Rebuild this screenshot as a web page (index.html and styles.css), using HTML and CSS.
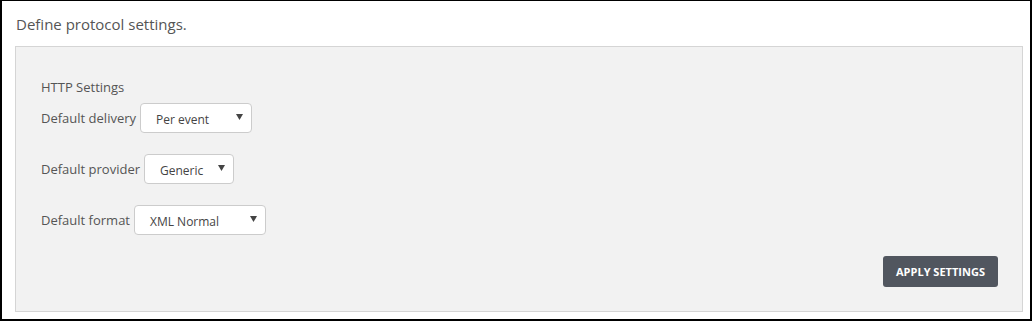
FILE: index.html
```html
<!DOCTYPE html>
<html>
<head>
    <title>Protocol settings</title>
    <link rel="stylesheet" href="styles.css">
</head>
<body>
    <div class="page">
        <p class="intro">Define protocol settings.</p>

        <div class="panel">
            <div class="group-title">HTTP Settings</div>

            <div class="field">
                <label>Default delivery</label>
                <div class="select select-delivery">
                    <span>Per event</span>
                    <svg class="caret" width="7" height="6" viewBox="0 0 7 6"><path d="M0 0 L7 0 L3.5 6 Z" fill="#444"/></svg>
                </div>
            </div>

            <div class="field">
                <label>Default provider</label>
                <div class="select select-provider">
                    <span>Generic</span>
                    <svg class="caret" width="7" height="6" viewBox="0 0 7 6"><path d="M0 0 L7 0 L3.5 6 Z" fill="#444"/></svg>
                </div>
            </div>

            <div class="field">
                <label>Default format</label>
                <div class="select select-format">
                    <span>XML Normal</span>
                    <svg class="caret" width="7" height="6" viewBox="0 0 7 6"><path d="M0 0 L7 0 L3.5 6 Z" fill="#444"/></svg>
                </div>
            </div>

            <div class="actions">
                <button class="apply">APPLY SETTINGS</button>
            </div>
        </div>
    </div>
</body>
</html>
```

FILE: styles.css
```css
html, body {
    margin: 0;
    padding: 0;
    background: #fff;
}

body {
    font-family: 'Open Sans', 'Liberation Sans', sans-serif;
    color: #555;
}

.page {
    box-sizing: border-box;
    width: 1032px;
    height: 321px;
    border: 2px solid #000;
    border-top-width: 1px;
    padding: 13px 7px 0 13px;
}

.intro {
    margin: 0 0 12px 1px;
    font-size: 15px;
    line-height: 20px;
    color: #555;
}

.panel {
    background: #f2f2f2;
    border: 1px solid #d5d5d5;
    padding: 31px 24px 24px 25px;
}

.group-title {
    font-size: 13px;
    line-height: 18px;
    margin-bottom: 7px;
}

.field {
    display: flex;
    align-items: center;
    gap: 4px;
    margin-bottom: 21px;
}

.field label {
    font-size: 13px;
    line-height: 18px;
}

.select {
    box-sizing: border-box;
    height: 30px;
    display: flex;
    align-items: center;
    justify-content: space-between;
    padding: 2px 8px 0 15px;
    background: #fff;
    border: 1px solid #ccc;
    border-radius: 4px;
    font-size: 12px;
    color: #444;
}

.caret {
    margin-top: -4px;
}

.select-delivery { width: 112px; }
.select-provider { width: 90px; }
.select-format { width: 132px; }

.actions {
    display: flex;
    justify-content: flex-end;
}

.apply {
    width: 115px;
    height: 31px;
    background: #51565f;
    color: #fff;
    border: none;
    border-radius: 3px;
    font-family: 'Open Sans', 'Liberation Sans', sans-serif;
    font-size: 11px;
    font-weight: bold;
    padding: 0;
    cursor: pointer;
}
```
